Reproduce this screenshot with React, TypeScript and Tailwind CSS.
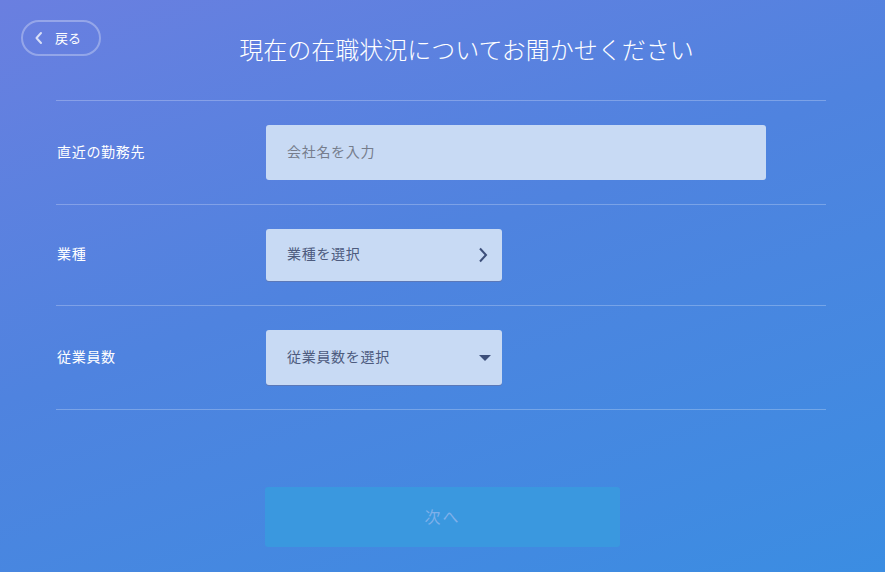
import React from "react";

const font = { fontFamily: '"Noto Sans CJK JP", "Noto Sans", sans-serif' };

function Row({ label, children }: { label: string; children: React.ReactNode }) {
  return (
    <div className="flex items-start pt-[24px] pb-[24px] border-b border-white/25">
      <div className="w-[210px] pl-[1px] pb-[3px] h-[55px] flex items-center text-[14px] tracking-[0.7px] text-white">{label}</div>
      {children}
    </div>
  );
}

export default function App() {
  return (
    <div
      className="relative w-[885px] h-[572px] overflow-hidden bg-[linear-gradient(160deg,#6a7fe0_0%,#4f83df_45%,#3b8de2_100%)]"
      style={font}
    >
      <button className="absolute left-[21px] top-[20px] w-[80px] h-[36px] rounded-full border-2 border-white/30 flex items-center text-white text-[13px]">
        <svg className="ml-[11px]" width="10" height="14" viewBox="0 0 10 14">
          <path d="M7 2 L2.5 7 L7 12" fill="none" stroke="rgba(255,255,255,0.75)" strokeWidth="2" strokeLinecap="round" strokeLinejoin="round" />
        </svg>
        <span className="ml-[11px]">戻る</span>
      </button>

      <div className="h-[100px] flex items-center justify-center pl-[48px] pb-[2px]">
        <h1 className="text-[24px] font-light text-white tracking-[0px]">現在の在職状況についてお聞かせください</h1>
      </div>

      <div className="mx-[56px] w-[770px] border-t border-white/25">
        <Row label="直近の勤務先">
          <div className="w-[500px] h-[55px] pb-[2px] rounded-[3px] bg-[#c8daf4] flex items-center pl-[21px] text-[14px] tracking-[0.7px] text-[#767d8c]">
            会社名を入力
          </div>
        </Row>
        <div className="flex items-start pt-[24px] pb-[24px] border-b border-white/25">
          <div className="w-[210px] pl-[1px] pb-[3px] h-[52px] flex items-center text-[14px] tracking-[0.7px] text-white">業種</div>
          <div className="w-[236px] h-[52px] rounded-[3px] bg-[#c8daf4] shadow-[0_1px_0_#5b78b8] flex items-center justify-between pl-[21px] pr-[14px] text-[14px] tracking-[0.7px] text-[#4d5b7e]">
            <span className="pb-[3px]">業種を選択</span>
            <svg width="10" height="16" viewBox="0 0 10 16">
              <path d="M2 1.5 L8 8 L2 14.5" fill="none" stroke="#3d4f7a" strokeWidth="2" />
            </svg>
          </div>
        </div>
        <Row label="従業員数">
          <div className="w-[236px] h-[55px] rounded-[3px] bg-[#c8daf4] shadow-[0_1px_0_#5b78b8] flex items-center justify-between pl-[21px] pr-[11px] text-[14px] tracking-[0.7px] text-[#4d5b7e]">
            <span className="pb-[2px]">従業員数を選択</span>
            <svg width="12" height="6" viewBox="0 0 12 6">
              <path d="M0 0 L12 0 L6 6 Z" fill="#3d4f7a" />
            </svg>
          </div>
        </Row>
      </div>

      <div className="flex justify-center mt-[77px]">
        <button className="w-[355px] h-[60px] pb-[3px] rounded-[3px] bg-[#3a98df] text-[16px] tracking-[2px] text-[#7fb0ea]">次へ</button>
      </div>
    </div>
  );
}
